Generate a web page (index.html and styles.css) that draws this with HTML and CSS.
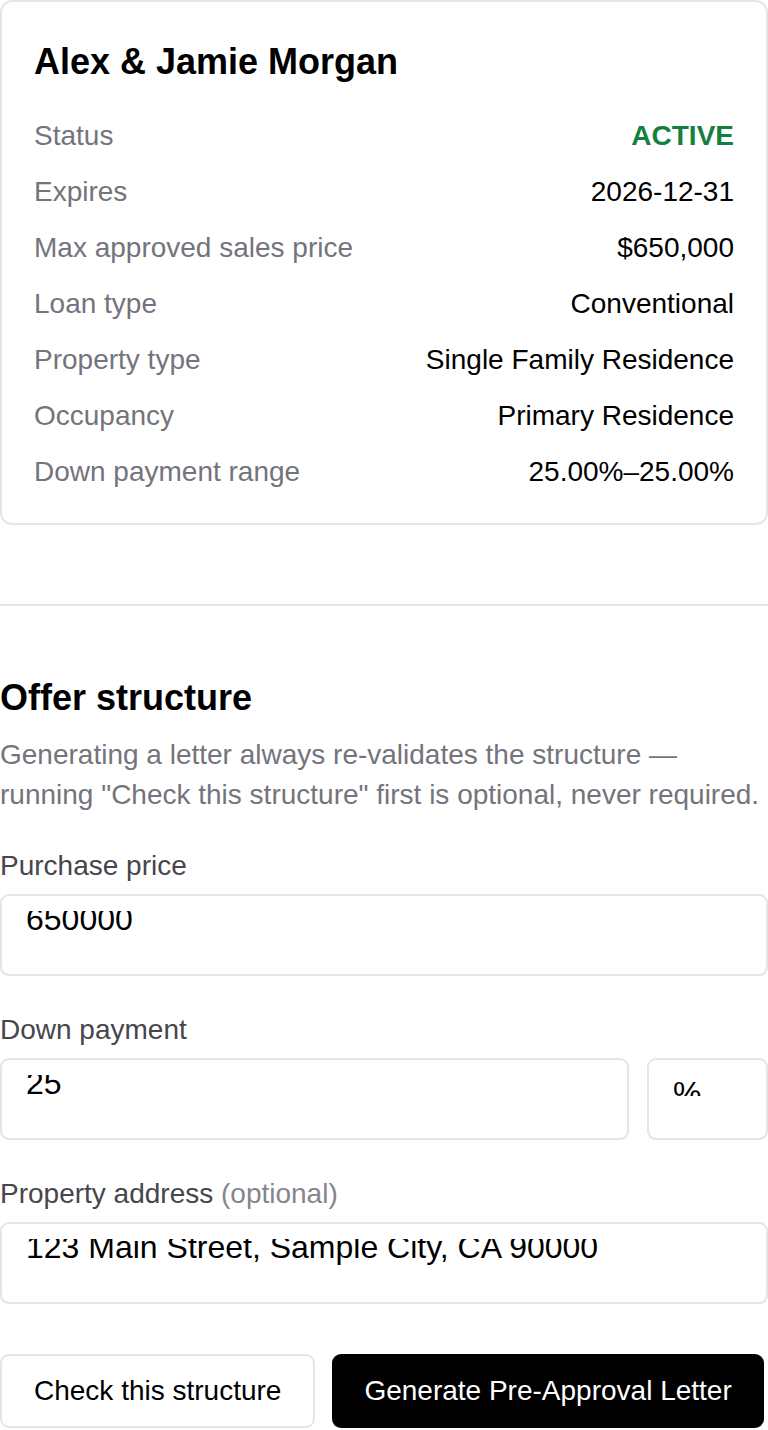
FILE: index.html
```html
<!DOCTYPE html>
<html lang="en">

<head>
    <meta charset="UTF-8">
    <meta name="viewport" content="width=device-width, initial-scale=1.0">
    <title>Pre-Approval</title>
    <link rel="stylesheet" href="styles.css">
</head>

<body>
    <!-- borrower summary -->
    <div class="card">
        <h1 class="card-title">Alex &amp; Jamie Morgan</h1>
        <div class="rows">
            <div class="row"><span class="row-label">Status</span><span class="row-value status">ACTIVE</span></div>
            <div class="row"><span class="row-label">Expires</span><span class="row-value">2026-12-31</span></div>
            <div class="row"><span class="row-label">Max approved sales price</span><span class="row-value">$650,000</span></div>
            <div class="row"><span class="row-label">Loan type</span><span class="row-value">Conventional</span></div>
            <div class="row"><span class="row-label">Property type</span><span class="row-value">Single Family Residence</span></div>
            <div class="row"><span class="row-label">Occupancy</span><span class="row-value">Primary Residence</span></div>
            <div class="row"><span class="row-label">Down payment range</span><span class="row-value">25.00%–25.00%</span></div>
        </div>
    </div>

    <hr class="divider">

    <!-- offer form -->
    <div class="offer">
        <h2 class="offer-title">Offer structure</h2>
        <p class="offer-note">Generating a letter always re-validates the structure — running "Check this structure" first is optional, never required.</p>

        <div class="field">
            <label class="field-label" for="price">Purchase price</label>
            <input class="input" type="text" id="price" value="650000">
        </div>

        <div class="field">
            <label class="field-label" for="down">Down payment</label>
            <div class="field-pair">
                <input class="input" type="text" id="down" value="25">
                <select class="input unit" id="downUnit">
                    <option>%</option>
                    <option>$</option>
                </select>
            </div>
        </div>

        <div class="field">
            <label class="field-label" for="address">Property address <span class="optional">(optional)</span></label>
            <input class="input" type="text" id="address" value="123 Main Street, Sample City, CA 90000">
        </div>

        <div class="actions">
            <button class="btn">Check this structure</button>
            <button class="btn btn-primary">Generate Pre-Approval Letter</button>
        </div>
    </div>
</body>

</html>
```

FILE: styles.css
```css
body {
    margin: 0;
    padding: 0;
    font-family: "Liberation Sans", Arial, sans-serif;
    font-size: 28px;
    color: #000;
    background: #fff;
}

.card {
    border: 2px solid #e6e6e6;
    border-radius: 12px;
    padding: 38px 32px 31px;
}

.card-title {
    margin: 0 0 33px;
    font-size: 36px;
    line-height: 1.2;
    font-weight: bold;
}

.rows {
    display: flex;
    flex-direction: column;
    gap: 16px;
}

.row {
    display: flex;
    justify-content: space-between;
    line-height: 40px;
}

.row-label {
    color: #74747c;
}

.status {
    color: #15803d;
    font-weight: bold;
}

.divider {
    border: 0;
    border-top: 2px solid #e6e6e6;
    margin: 79px 0 70px;
}

.offer-title {
    margin: 0 0 16px;
    font-size: 36px;
    line-height: 1.2;
    font-weight: bold;
}

.offer-note {
    margin: 0 0 31px;
    color: #74747c;
    line-height: 40px;
}

.field {
    margin-bottom: 34px;
}

.field-label {
    display: block;
    line-height: 40px;
    margin-bottom: 8px;
    color: #46464c;
}

.optional {
    color: #85858c;
}

/* the value sits high in the box and its top is cut off, like the original */
.input {
    display: block;
    box-sizing: border-box;
    width: 100%;
    height: 82px;
    margin: 0;
    padding: 0 24px 46px;
    border: 2px solid #e6e6e6;
    border-top: 17px solid #fff;
    outline: 2px solid #e6e6e6;
    outline-offset: -2px;
    border-radius: 9px;
    background: #fff;
    font-family: "Liberation Sans", Arial, sans-serif;
    font-size: 32px;
    color: #000;
}

.field-pair {
    display: flex;
    gap: 18px;
}

.field-pair .input {
    flex: 1;
}

.field-pair .unit {
    flex: 0 0 121px;
    padding-bottom: 42px;
    appearance: none;
    -webkit-appearance: none;
}

.actions {
    display: flex;
    gap: 17px;
    margin-top: 50px;
}

.btn {
    box-sizing: border-box;
    height: 74px;
    padding: 0 32px;
    border: 2px solid #e6e6e6;
    border-radius: 9px;
    background: #fff;
    color: #000;
    font-family: "Liberation Sans", Arial, sans-serif;
    font-size: 28px;
}

.btn-primary {
    padding: 0 32px;
    border: 0;
    background: #000;
    color: #fff;
}
```
